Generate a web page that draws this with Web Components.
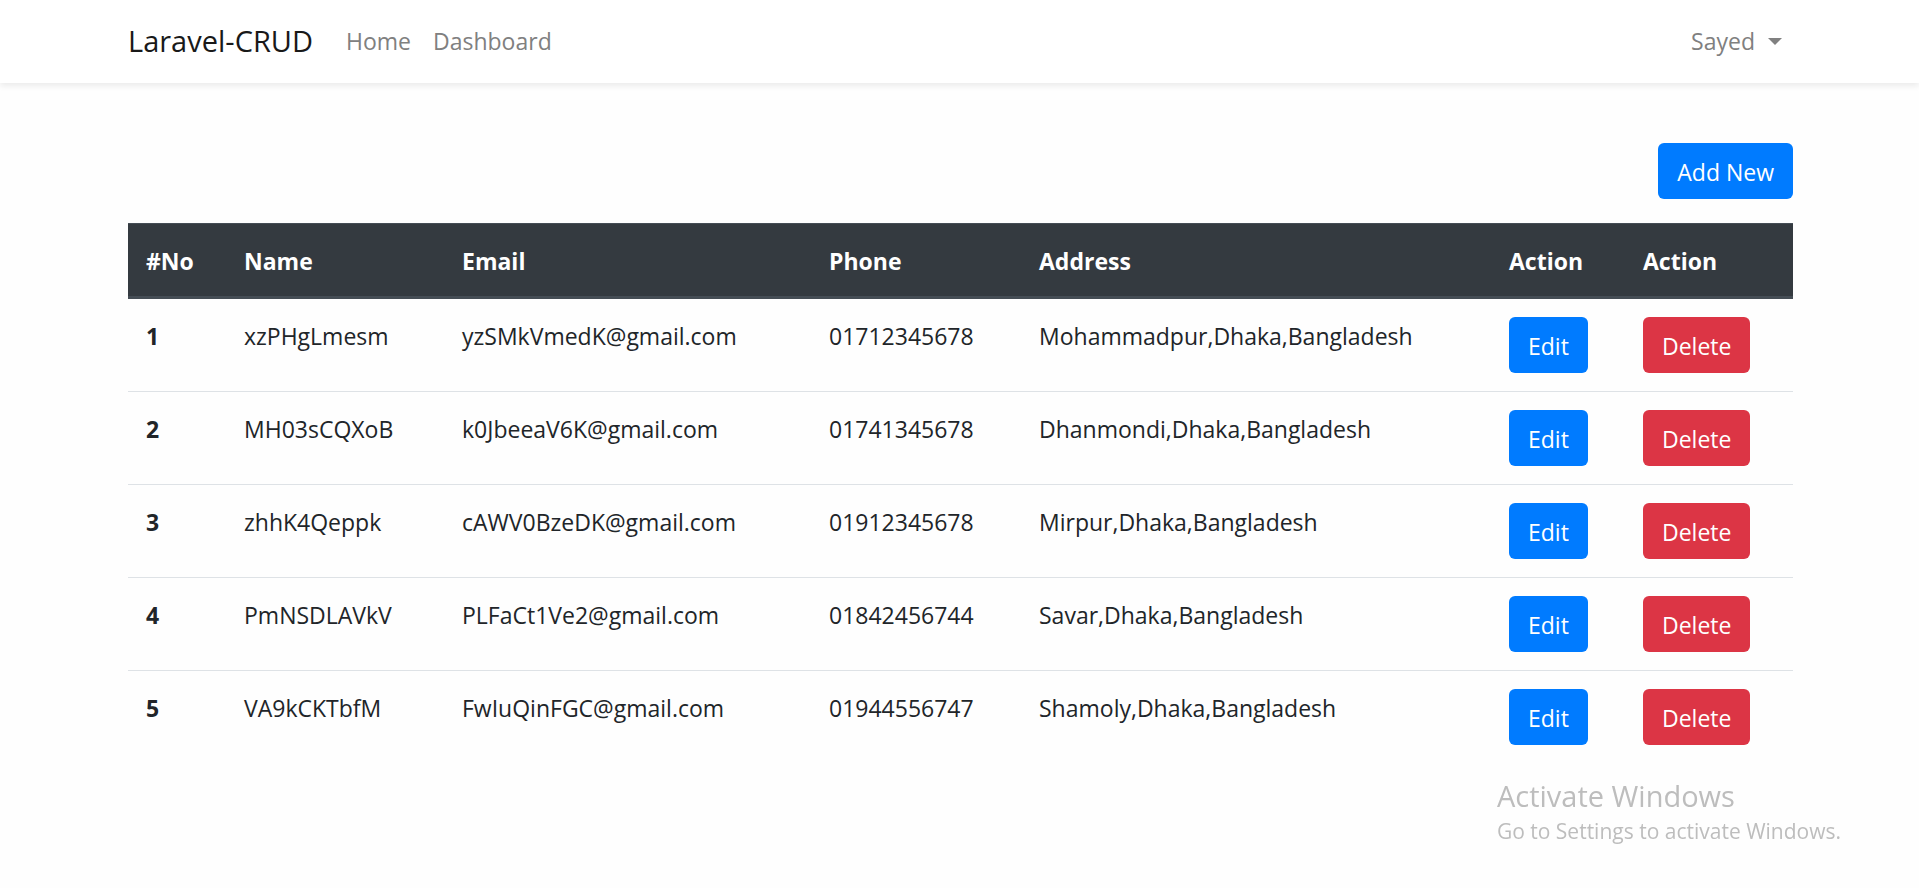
<!DOCTYPE html>
<html lang="en">
<head>
<meta charset="utf-8">
<meta name="viewport" content="width=device-width, initial-scale=1">
<title>Laravel-CRUD</title>
<style>
  body {
    margin: 0;
    background: #fefefe;
    color: #212529;
    font: 400 23px/36px "Open Sans", "Noto Sans", sans-serif;
  }
  main {
    box-sizing: border-box;
    max-width: 1711px;
    margin: 0 auto;
    padding: 60px 22px 48px 24px;
  }
  .toolbar {
    display: flex;
    justify-content: flex-end;
    margin-bottom: 24px;
  }
</style>
</head>
<body>
<nav-bar>
  <nav-link slot="brand" brand href="#">Laravel-CRUD</nav-link>
  <nav-link href="#home">Home</nav-link>
  <nav-link href="#dashboard">Dashboard</nav-link>
  <user-menu slot="end">Sayed</user-menu>
</nav-bar>
<main>
  <div class="toolbar"><action-button href="#new">Add New</action-button></div>
  <contact-table></contact-table>
</main>
<activation-notice>
  <span slot="title">Activate Windows</span>
  Go to Settings to activate Windows.
</activation-notice>

<script>
class BaseElement extends HTMLElement {
  render(html) {
    const template = document.createElement('template');
    template.innerHTML = html;
    this.attachShadow({ mode: 'open' }).append(template.content.cloneNode(true));
  }
}

customElements.define('nav-bar', class extends BaseElement {
  connectedCallback() {
    this.render(`
      <style>
        :host { display: block; position: relative; background: #fff; box-shadow: 0 3px 6px rgba(0, 0, 0, .08); }
        nav {
          box-sizing: border-box; max-width: 1711px; min-height: 83px;
          margin: 0 auto; padding: 11px 22px 12px 24px;
          display: flex; align-items: center;
        }
        .links { display: flex; flex: 1; margin-left: 22px; }
      </style>
      <nav aria-label="Main">
        <slot name="brand"></slot>
        <div class="links"><slot></slot></div>
        <slot name="end"></slot>
      </nav>`);
  }
});

customElements.define('nav-link', class extends BaseElement {
  connectedCallback() {
    this.render(`
      <style>
        :host { display: block; }
        a { display: block; padding: 12px 11px; color: #808080; text-decoration: none; }
        a:hover { color: #4d4d4d; }
        :host([brand]) a { padding: 0; font-size: 29px; line-height: 40px; color: #191919; }
      </style>
      <a href="${this.getAttribute('href')}"><slot></slot></a>`);
  }
});

customElements.define('user-menu', class extends BaseElement {
  connectedCallback() {
    this.render(`
      <style>
        :host { display: block; }
        button {
          display: flex; align-items: center; gap: 13px;
          padding: 12px 11px; border: 0; background: none;
          font: inherit; color: #808080; cursor: pointer;
        }
        .caret { border: 7px solid transparent; border-top-color: currentColor; border-bottom: 0; }
      </style>
      <button type="button" aria-haspopup="true"><slot></slot><span class="caret"></span></button>`);
  }
});

customElements.define('action-button', class extends BaseElement {
  connectedCallback() {
    const href = this.getAttribute('href');
    const control = href
      ? `<a class="btn" href="${href}"><slot></slot></a>`
      : `<button class="btn" type="button"><slot></slot></button>`;
    this.render(`
      <style>
        :host { display: inline-block; vertical-align: top; --fill: #007bff; }
        :host([variant="danger"]) { --fill: #dc3545; }
        .btn {
          display: block; box-sizing: border-box; padding: 11px 19px 9px;
          border: 0; border-radius: 6px; background: var(--fill); color: #fff;
          font: inherit; text-decoration: none; white-space: nowrap; cursor: pointer;
        }
        .btn:hover { filter: brightness(.9); }
      </style>${control}`);
  }
});

const contacts = [
  ['xzPHgLmesm', 'yzSMkVmedK@gmail.com', '01712345678', 'Mohammadpur,Dhaka,Bangladesh'],
  ['MH03sCQXoB', 'k0JbeeaV6K@gmail.com', '01741345678', 'Dhanmondi,Dhaka,Bangladesh'],
  ['zhhK4Qeppk', 'cAWV0BzeDK@gmail.com', '01912345678', 'Mirpur,Dhaka,Bangladesh'],
  ['PmNSDLAVkV', 'PLFaCt1Ve2@gmail.com', '01842456744', 'Savar,Dhaka,Bangladesh'],
  ['VA9kCKTbfM', 'FwIuQinFGC@gmail.com', '01944556747', 'Shamoly,Dhaka,Bangladesh']
];
const columns = [['#No', 98], ['Name', 218], ['Email', 367], ['Phone', 210], ['Address', 470], ['Action', 134], ['Action', 168]];

customElements.define('contact-table', class extends BaseElement {
  connectedCallback() {
    this.render(`
      <style>
        :host { display: block; overflow-x: auto; }
        table { width: 100%; table-layout: fixed; border-spacing: 0; }
        th, td { padding: 19px 18px 17px; text-align: left; vertical-align: top; white-space: nowrap; }
        th { font-weight: 700; }
        thead th { background: #343a40; color: #fff; border-top: 1px solid #454d55; border-bottom: 3px solid #454d55; }
        tbody tr + tr > * { border-top: 1px solid #dee2e6; }
        .action { padding: 18px; }
      </style>
      <table>
        <colgroup>${columns.map(([, width]) => `<col style="width:${width}px">`).join('')}</colgroup>
        <thead><tr>${columns.map(([name]) => `<th scope="col">${name}</th>`).join('')}</tr></thead>
        <tbody>${contacts.map((contact, i) => `
          <tr>
            <th scope="row">${i + 1}</th>
            ${contact.map(value => `<td>${value}</td>`).join('')}
            <td class="action"><action-button href="#edit-${i + 1}">Edit</action-button></td>
            <td class="action"><action-button variant="danger">Delete</action-button></td>
          </tr>`).join('')}
        </tbody>
      </table>`);
  }
});

customElements.define('activation-notice', class extends BaseElement {
  connectedCallback() {
    this.render(`
      <style>
        :host {
          display: block; position: fixed; right: 78px; bottom: 42px;
          font-size: 21px; line-height: 30px; color: #bdbdbd; pointer-events: none;
        }
        .title { font-size: 29px; line-height: 40px; }
      </style>
      <div class="title"><slot name="title"></slot></div>
      <div><slot></slot></div>`);
  }
});
</script>
</body>
</html>
